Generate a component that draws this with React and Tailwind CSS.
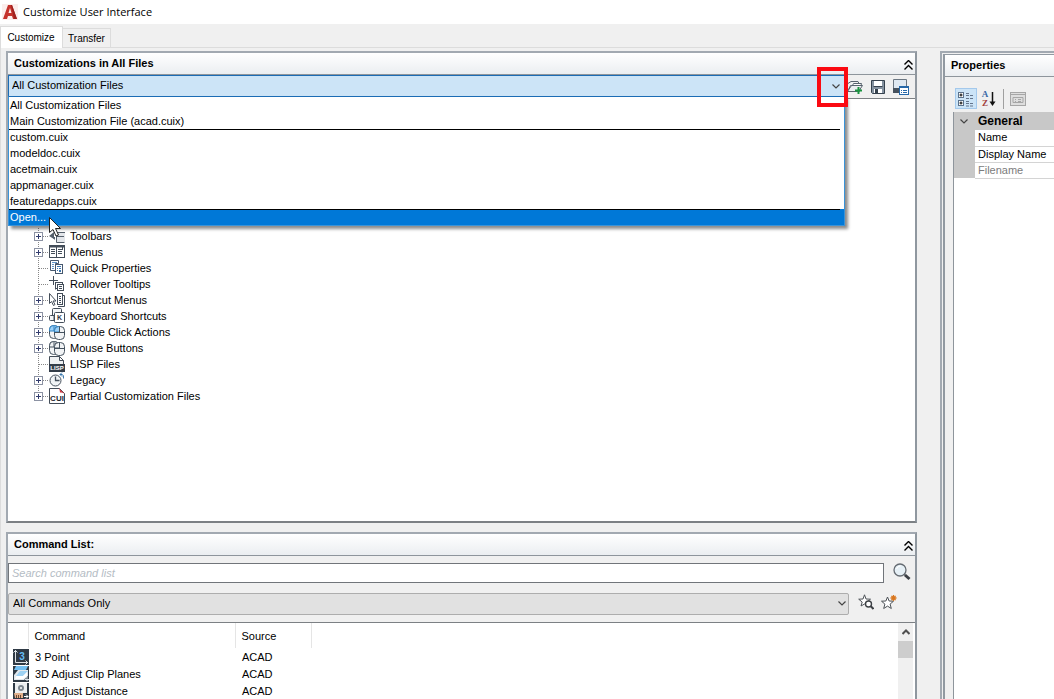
import React, { useState } from 'react';

const customizationFiles = [
  { name: 'All Customization Files' },
  { name: 'Main Customization File (acad.cuix)' },
  { name: 'custom.cuix', separator: true },
  { name: 'modeldoc.cuix' },
  { name: 'acetmain.cuix' },
  { name: 'appmanager.cuix' },
  { name: 'featuredapps.cuix' },
  { name: 'Open...', separator: true },
];

const treeItems = [
  { label: 'Toolbars', icon: 'toolbars', expandable: true },
  { label: 'Menus', icon: 'menus', expandable: true },
  { label: 'Quick Properties', icon: 'quick' },
  { label: 'Rollover Tooltips', icon: 'rollover' },
  { label: 'Shortcut Menus', icon: 'shortcut', expandable: true },
  { label: 'Keyboard Shortcuts', icon: 'keyboard', expandable: true },
  { label: 'Double Click Actions', icon: 'doubleClick', expandable: true },
  { label: 'Mouse Buttons', icon: 'mouse', expandable: true },
  { label: 'LISP Files', icon: 'lisp' },
  { label: 'Legacy', icon: 'legacy', expandable: true },
  { label: 'Partial Customization Files', icon: 'cui', expandable: true },
];

const commands = [
  { name: '3 Point', source: 'ACAD', icon: 'point' },
  { name: '3D Adjust Clip Planes', source: 'ACAD', icon: 'clip' },
  { name: '3D Adjust Distance', source: 'ACAD', icon: 'distance' },
];

const properties = [
  { label: 'Name' },
  { label: 'Display Name' },
  { label: 'Filename', disabled: true },
];

const Mouse = ({ buttonFill, buttonStroke }) => (
  <g fill="#f1f3f5" stroke="#45525f">
    <rect x="0.5" y="1.5" width="9" height="13" rx="4" />
    <path d="M0.5 7V5.500q0-4 4-4h1q4 0 4 4V7z" fill={buttonFill} stroke={buttonStroke} />
    <path d="M5 2v5" stroke={buttonStroke} />
    <rect x="5.500" y="2.500" width="10" height="13" rx="4" />
    <path d="M5.500 8V6.500q0-4 4-4h1V8z" fill={buttonFill} stroke={buttonStroke} />
    <path d="M5.500 8.500h10M10.500 2.500v6" fill="none" />
  </g>
);

const treeIcons = {
  toolbars: (
    <g fill="none" stroke="#555f6b">
      <path d="M7 5h9v9H7z" fill="#e3e6ea" stroke="none" />
      <path d="M5 4.500h11M7.500 4.500v10M7.500 14.500h8M8 8.500h7" />
      <path d="M0 8l5-4v7z" fill="#555f6b" stroke="none" />
      <path d="M3 9l3 3v-3z" fill="#555f6b" stroke="none" />
    </g>
  ),
  menus: (
    <g fill="none" stroke="#434d59">
      <rect x="0.5" y="1.5" width="15" height="12" fill="#fff" />
      <path d="M0 2.500h16" strokeWidth="2" />
      <path d="M7.500 3v10M13.500 3v2" />
      <path d="M2 5.500h4M2 7.500h4M2 9.500h4M9 5.500h5M9 7.500h4M9 9.500h4" />
    </g>
  ),
  quick: (
    <g stroke="#46586e" fill="#fff">
      <path d="M1.500 0.500h8v3h-3v7h-5z" />
      <path d="M3 2.500h5M3 4.500h2M3 6.500h2M3 8.500h2" stroke="#5f94c9" />
      <rect x="6.500" y="4.500" width="7" height="9" />
      <path d="M8 6.500h4M8 8.500h1M10 8.500h2M8 10.500h1" stroke="#3d76b0" />
      <path d="M10 10h2v2h-2z" fill="#3d76b0" stroke="none" />
    </g>
  ),
  rollover: (
    <g stroke="#434d59" fill="#fff">
      <path d="M4.500 0v9M0 4.500h9" />
      <path d="M6.500 13.500v-6h7" fill="none" />
      <rect x="6.500" y="6.500" width="7" height="6" />
      <rect x="8.500" y="8.500" width="6" height="6" />
      <path d="M10 10.500h3M10 12.500h3" />
    </g>
  ),
  shortcut: (
    <g stroke="#434d59" fill="#fff">
      <path d="M0.500 1.500v10l2-2 2 4 1.500-1-2-3.500h3z" />
      <path d="M13 3.500h2.500v11H9" />
      <rect x="8.500" y="1.500" width="5" height="11" />
      <path d="M10 4.500h2M10 6.500h2M10 8.500h2M10 10.500h2" />
    </g>
  ),
  keyboard: (
    <g stroke="#434d59" fill="#f4f6f8">
      <rect x="3.500" y="0.500" width="9" height="8" rx="1" />
      <path d="M5 12.500H1.500q-1 0-1-1v-3q0-1 1-1H5z" />
      <rect x="5.500" y="4.500" width="10" height="10" rx="1" fill="#fff" />
      <text x="10.500" y="12" textAnchor="middle" fontSize="7" fontWeight="bold" fill="#2c3540" stroke="none">
        K
      </text>
    </g>
  ),
  doubleClick: <Mouse buttonFill="#9bd0f7" buttonStroke="#2f83c4" />,
  mouse: <Mouse buttonFill="#f1f3f5" buttonStroke="#45525f" />,
  lisp: (
    <g>
      <path d="M0.500 9V0.500h10l4 4V9M10.500 0.500v4h4" fill="#eef0f2" stroke="#434d59" />
      <rect x="0" y="8" width="16" height="8" fill="#333d48" />
      <text x="8" y="14" textAnchor="middle" fontSize="6" fontWeight="bold" fill="#fff">
        LISP
      </text>
    </g>
  ),
  legacy: (
    <g fill="#f1f4f6" stroke="#46515d">
      <circle cx="6.500" cy="8.500" r="5.500" />
      <path d="M6.500 4.500v4h4" fill="none" strokeWidth="1.300" />
      <path d="M11 2.500h2q2 0 1.500 4M13 0.500l-2 2 2 2" stroke="#3776ac" fill="none" />
    </g>
  ),
  cui: (
    <g>
      <path d="M0.500 15.500v-15h10l5 5v10z" fill="#fff" stroke="#434d59" />
      <path d="M9.500 0l6.500 6q-2-2-5-1.500 0-3-1.500-4.500z" fill="#cf3943" />
      <text x="8" y="13" textAnchor="middle" fontSize="8" fontWeight="bold" fill="#20262d">
        CUI
      </text>
    </g>
  ),
};

const commandIcons = {
  point: (
    <g>
      <rect width="16" height="16" fill="#2f3a45" />
      <path d="M2.500 1v12.500H15M0.500 3.500l2-2 2 2M12.500 11.500l2 2-2 2" stroke="#dfe4e8" fill="none" />
      <text x="9" y="11" textAnchor="middle" fontSize="10" fontWeight="bold" fill="#65bdf5">3</text>
    </g>
  ),
  clip: (
    <g>
      <rect width="16" height="16" fill="#2f3a45" />
      <path d="M3 0h12l-2 4H1z" fill="#72bff2" />
      <path d="M5 4h10v6l-4 4H1V9z" fill="#e2e8ec" />
      <path d="M3 10l4-5h8l-5 5z" fill="#9ed2f3" />
      <path d="M3 10h7l4-4v4l-4 3H2z" fill="#fff" />
      <path d="M14 11v4M12 13.500h4" stroke="#dfe4e8" />
    </g>
  ),
  distance: (
    <g>
      <rect width="16" height="16" fill="#2f3a45" />
      <rect x="2" y="0" width="12" height="10" fill="#eceff1" />
      <circle cx="8" cy="5" r="3" fill="#7d8790" />
      <circle cx="8" cy="5" r="1" fill="#fff" />
      <path d="M1 10h9v5H2z" fill="#e3b18c" />
      <path d="M3.500 12v3M5.500 12v3M7.500 12v3" stroke="#6d4a35" />
      <path d="M11 13.500h4M13 11.500l2 2-2 2" stroke="#fff" fill="none" />
    </g>
  ),
};

const SmallIcon = ({ children }) => (
  <svg className="block h-4 w-4 shrink-0" viewBox="0 0 16 16" aria-hidden="true">
    {children}
  </svg>
);

const Chevron = ({ className }) => (
  <svg className={className} viewBox="0 0 8 5" fill="none" aria-hidden="true">
    <path d="M0.500 0.500L4 4l3.500-3.500" stroke="#444" strokeWidth="1.200" />
  </svg>
);

const PanelHeader = ({ title, collapsible }) => (
  <div className="flex h-[22px] shrink-0 items-center justify-between border-b border-[#8e959c] bg-linear-to-b from-white to-[#ebeef1] pr-0.5 pb-0.5 pl-1.5">
    <h2 className="font-bold whitespace-nowrap text-black">{title}</h2>
    {collapsible && (
      <button type="button" aria-label={`Collapse ${title}`} className="pt-1">
        <svg className="block h-[10px] w-[9px]" viewBox="0 0 9 10" fill="none" stroke="#000">
          <path d="M0.500 4.500l4-4 4 4M0.500 9.500l4-4 4 4" strokeWidth="1.400" />
        </svg>
      </button>
    )}
  </div>
);

const TitleBar = () => (
  <header className="flex h-6 shrink-0 items-center gap-[5px] bg-white pl-0.5">
    <svg className="h-4 w-4" viewBox="0 0 16 16" aria-hidden="true">
      <rect width="16" height="16" fill="#fbeeec" />
      <path d="M1 15L6 1h4l5 14h-4l-1-3H6l-1 3z" fill="#c5322b" />
      <path d="M6.500 9L8 4l1.500 5z" fill="#fbeeec" />
      <path d="M9 1h1l5 14h-3z" fill="#9f221f" />
    </svg>
    <h1 className="font-['Open_Sans','Noto_Sans',sans-serif] text-[11px] text-black">
      Customize User Interface
    </h1>
  </header>
);

const Tabs = () => (
  <nav className="flex h-6 shrink-0 items-end border-b border-[#dcdcdc]" role="tablist">
    <button type="button" role="tab" aria-selected="true" className="-mb-px h-[22px] w-[63px] border border-b-0 border-[#dcdcdc] bg-white pr-px text-[10px]">
      Customize
    </button>
    <button type="button" role="tab" aria-selected="false" className="h-[19px] w-12 border-t border-r border-[#dcdcdc] pt-px text-[10px]">
      Transfer
    </button>
  </nav>
);

const FileDropdown = ({ onSelect }) => (
  <ul
    role="listbox"
    aria-label="Customization files"
    className="absolute top-full -right-px -left-px z-10 border border-[#3a93d8] border-t-[#1b6cb5] bg-white shadow-[3px_3px_3px_rgba(0,0,0,0.45)]"
  >
    {customizationFiles.map((file) => {
      const isOpen = file.name === 'Open...';

      return (
        <li
          key={file.name}
          role="option"
          aria-selected={isOpen}
          onClick={() => onSelect(file.name)}
          className={`relative h-4 px-px leading-4 ${isOpen ? 'bg-[#0078d7] text-white' : 'text-black'}`}
        >
          {file.separator && <span className="absolute top-0 right-1 left-0 h-px bg-black" />}
          {file.name}
        </li>
      );
    })}
    {/* Mouse pointer */}
    <li role="presentation" className="pointer-events-none absolute bottom-0 left-10">
      <svg className="absolute -top-2 left-0 h-5 w-3.5" viewBox="0 0 14 20" aria-hidden="true">
        <path d="M0.500 0.500v15l3.500-3 3 6.500 2.500-1-3-6.500h5z" fill="#fff" stroke="#222" />
      </svg>
    </li>
  </ul>
);

const FileToolbar = () => (
  <div className="flex w-[70px] shrink-0 items-center justify-between pr-1.5 pl-0.5">
    <button type="button" aria-label="Load partial customization file">
      <SmallIcon>
        <path d="M0.500 12.500l3-6h2l1-2h8l-2 8z" fill="#fff" stroke="#59636e" />
        <path d="M0.500 12.500l4-6h11l-4 6z" fill="#eceff1" stroke="#59636e" />
        <path d="M1 4.500l3-2h7l1 2" fill="none" stroke="#59636e" />
        <path d="M11.500 8v7M8 11.500h7" stroke="#1a9440" strokeWidth="2" />
      </SmallIcon>
    </button>
    <button type="button" aria-label="Save all current customization files">
      <SmallIcon>
        <path d="M1.500 1.500h13v13h-12l-1-1z" fill="#8592a0" stroke="#35414d" />
        <path d="M4 2h8v5H4z" fill="#fff" />
        <path d="M3.500 7.500h9" stroke="#35414d" />
        <path d="M4 10h8v4H4z" fill="#fff" />
        <path d="M5 10h3v4H5z" fill="#35414d" />
      </SmallIcon>
    </button>
    <button type="button" aria-label="Display all types of customization elements">
      <SmallIcon>
        <path d="M0.500 0.500h13v12h-13z" fill="#dfe8f1" stroke="#6a7682" />
        <path d="M0 9h7v5H0z" fill="#46515d" />
        <rect x="6.500" y="7.500" width="9" height="8" fill="#fff" stroke="#2668a9" />
        <path d="M6 8.500h10M8 11.500h1M10 11.500h4M8 13.500h1M10 13.500h4" stroke="#2668a9" />
      </SmallIcon>
    </button>
  </div>
);

const TreeRow = ({ item, isLast }) => (
  <li role="treeitem" className="flex h-4 items-center text-black">
    <svg className="block h-4 w-4 shrink-0" viewBox="0 0 16 16" fill="none" aria-hidden="true">
      <path d={isLast ? 'M5.500 0v8' : 'M5.500 0v16'} stroke="#888" strokeDasharray="1 1" />
      <path d="M6 8.500h10" stroke="#888" strokeDasharray="1 1" />
      {item.expandable && (
        <>
          <rect x="1.500" y="4.500" width="8" height="8" fill="#fff" stroke="#8c92a3" />
          <path d="M3 8.500h5M5.500 6v5" stroke="#323c6e" />
        </>
      )}
    </svg>
    <SmallIcon>{treeIcons[item.icon]}</SmallIcon>
    <span className="pl-[5px] whitespace-nowrap">{item.label}</span>
  </li>
);

const CustomizationPanel = () => {
  const [file, setFile] = useState('All Customization Files');

  return (
    <section className="flex min-h-0 flex-1 flex-col border-2 border-[#a2a9b1] border-r-[#8f979f] border-b-[#7c8084]">
      <PanelHeader title="Customizations in All Files" collapsible />
      <div className="flex h-[23px] shrink-0">
        <div className="relative mb-px flex-1 border border-[#1b6cb5] bg-[#cce4f7]">
          <select
            aria-label="Customization file"
            value={file}
            onChange={(e) => setFile(e.target.value)}
            className="block h-full w-full appearance-none bg-transparent px-[3px] pb-0.5 text-black outline-none"
          >
            {customizationFiles.map((f) => (
              <option key={f.name}>{f.name}</option>
            ))}
          </select>
          <Chevron className="pointer-events-none absolute top-2 right-1 h-[5px] w-2" />
          <FileDropdown onSelect={setFile} />
          {/* Callout around the drop-down arrow */}
          <div className="pointer-events-none absolute -top-[9px] -right-1 z-20 h-10 w-[31px] border-4 border-[#fb0a12]" />
        </div>
        <FileToolbar />
      </div>
      <ul role="tree" aria-label="Customizations" className="min-h-0 flex-1 overflow-hidden border-t border-[#7c8084] bg-white pt-[129px] pl-[25px]">
        {treeItems.map((item, i) => (
          <TreeRow key={item.label} item={item} isLast={i === treeItems.length - 1} />
        ))}
      </ul>
    </section>
  );
};

const CommandPanel = () => (
  <section className="flex h-[167px] shrink-0 flex-col border-2 border-b-0 border-[#a2a9b1] border-r-[#8f979f]">
    <PanelHeader title="Command List:" collapsible />
    <div className="flex h-[27px] items-end pr-1">
      <input
        type="text"
        aria-label="Search command list"
        placeholder="Search command list"
        className="h-5 min-w-0 flex-1 border border-[#71757a] bg-white px-[3px] italic outline-none placeholder:text-[#b4bcc4]"
      />
      <button type="button" aria-label="Search" className="ml-[9px] pb-0.5">
        <svg className="block h-[18px] w-[18px]" viewBox="0 0 18 18" aria-hidden="true">
          <circle cx="7" cy="7" r="6" fill="#e6f0f6" stroke="#656b72" strokeWidth="1.300" />
          <path d="M3.500 6q1-3 4-3" stroke="#fff" fill="none" />
          <path d="M11 11l1.500 1.500" stroke="#656b72" strokeWidth="1.500" />
          <path d="M12 12l4.500 4" stroke="#3b3f44" strokeWidth="3" />
        </svg>
      </button>
    </div>
    <div className="flex items-center pt-2.5 pr-[18px]">
      <div className="relative min-w-0 flex-1">
        <select
          aria-label="Command category"
          className="block h-[22px] w-full appearance-none rounded-xs border border-[#adadad] bg-[#e1e1e1] px-1 pb-0.5 text-black outline-none"
        >
          <option>All Commands Only</option>
        </select>
        <Chevron className="pointer-events-none absolute top-2 right-[3px] h-[5px] w-2" />
      </div>
      <button type="button" aria-label="Find command" className="ml-[9px] pb-1">
        <SmallIcon>
          <path
            d="M6.500 0.800l1.500 4.200 4.500.2-3.500 2.800-2.500 2-3.500 2 1.200-4L.7 5.200 5 5z"
            fill="#fff"
            stroke="#4d5257"
          />
          <circle cx="10.500" cy="10" r="3" fill="#fff" stroke="#3d4145" strokeWidth="1.400" />
          <path d="M12.500 12l3 3" stroke="#3d4145" strokeWidth="2" />
        </SmallIcon>
      </button>
      <button type="button" aria-label="Create a new command" className="ml-[7px] pb-1">
        <SmallIcon>
          <path
            d="M6.500 3l1.600 4 4.400.2-3.400 2.900 1.200 4.400-3.800-2.400-3.800 2.400 1.200-4.400L.5 7.200 4.900 7z"
            fill="#fff"
            stroke="#4d5257"
          />
          <path d="M12.500 1v6M9.500 4h6M10.400 1.900l4.200 4.200M14.600 1.900l-4.200 4.200" stroke="#d9771f" strokeWidth="1.300" />
        </SmallIcon>
      </button>
    </div>
    <div className="mt-[7px] flex min-h-0 flex-1 border-t border-[#7c8084] bg-white">
      <div className="min-w-0 flex-1 overflow-hidden">
        <table className="w-full table-fixed border-collapse text-left text-black">
          <thead>
            <tr className="h-[25px]">
              <th className="w-[20px] border-r border-[#e5e5e5]" aria-label="Icon" />
              <th className="w-[207px] border-r border-[#e5e5e5] pl-1.5 font-normal">Command</th>
              <th className="w-[76px] border-r border-[#e5e5e5] pl-1.5 font-normal">Source</th>
              <th aria-label="Empty" />
            </tr>
          </thead>
          <tbody>
            {commands.map((command) => (
              <tr key={command.name} className="h-[17px]">
                <td className="p-0 pl-[5px]">
                  <SmallIcon>{commandIcons[command.icon]}</SmallIcon>
                </td>
                <td className="p-0 pl-[7px]">{command.name}</td>
                <td className="p-0 pl-[7px]">{command.source}</td>
                <td />
              </tr>
            ))}
          </tbody>
        </table>
      </div>
      <div className="mr-0.5 flex w-[15px] flex-col items-center bg-[#f0f0f0]">
        <button type="button" aria-label="Scroll up" className="flex h-[18px] items-center">
          <svg className="block h-[6px] w-2" viewBox="0 0 8 6" fill="none" aria-hidden="true">
            <path d="M0.500 5L4 1.500 7.500 5" stroke="#505050" strokeWidth="2" />
          </svg>
        </button>
        <div className="h-[17px] w-full bg-[#cdcdcd]" />
      </div>
    </div>
  </section>
);

const PropertiesPanel = () => (
  <aside className="flex w-[114px] shrink-0 flex-col overflow-hidden border-t-2 border-l-2 border-[#a2a9b1] pt-px pl-px">
    <div className="flex min-h-0 flex-1 flex-col border-t border-l-2 border-[#9199a1]">
      <PanelHeader title="Properties" />
      <div className="flex h-[35px] shrink-0 items-center pt-2 pl-2.5">
        <button type="button" aria-label="Categorized" className="flex h-[21px] w-[22px] items-center justify-center border border-[#a4c9ec] bg-[#cce4f7]">
          <SmallIcon>
            <rect x="0.500" y="1.500" width="5" height="5" fill="#fff" stroke="#5c728b" />
            <rect x="0.500" y="9.500" width="5" height="5" fill="#fff" stroke="#5c728b" />
            <path d="M1.500 4h3M3 2.500v3M1.500 12h3M3 10.500v3" stroke="#000" />
            <path
              d="M8 2.500h3M8 4.500h3M12 4.500h3M8 7.500h3M12 7.500h3M8 10.500h3M8 12.500h3M12 12.500h3M8 15h3M12 15h3"
              stroke="#64748b"
            />
          </SmallIcon>
        </button>
        <button type="button" aria-label="Alphabetical" className="ml-1 flex h-5 items-center text-[9px] leading-[9px] font-bold">
          <span className="flex w-2 flex-col items-center font-['Liberation_Serif',serif]">
            <span className="text-[#3966a5]">A</span>
            <span className="text-[#a3413d]">Z</span>
          </span>
          <svg className="block h-4 w-[7px]" viewBox="0 0 7 16" aria-hidden="true">
            <path d="M3.500 1v12" stroke="#111" strokeWidth="1.500" />
            <path d="M0.500 10.500h6l-3 4.500z" fill="#111" />
          </svg>
        </button>
        <span className="ml-[7px] h-5 w-px bg-[#a0a0a0]" />
        <button type="button" aria-label="Property pages" disabled className="ml-1.5">
          <SmallIcon>
            <rect x="0.500" y="1.500" width="15" height="13" fill="#dedede" stroke="#a6a6a6" />
            <path d="M1 3.500h14M3 6.500h10v5H3zM5 8.500h1M8 8.500h3M5 10.500h1M8 10.500h3" fill="none" stroke="#a6a6a6" />
          </SmallIcon>
        </button>
      </div>
      <div className="ml-2 min-h-0 flex-1 border-l border-[#8e959c] bg-white">
        <table className="w-full table-fixed border-collapse bg-white text-left">
          <thead>
            <tr className="h-[18px] bg-[#c8c8c8]">
              <th className="w-[21px] p-0">
                <Chevron className="ml-1.5 h-[5px] w-2" />
              </th>
              <th className="p-0 pl-[3px] text-xs leading-4 font-bold text-black">General</th>
            </tr>
          </thead>
          <tbody>
            {properties.map((property) => (
              <tr key={property.label} className="h-4">
                <td className="bg-[#c8c8c8] p-0" />
                <td className={`border-b border-[#d4d4d4] p-0 pl-[3px] leading-[15px] whitespace-nowrap ${property.disabled ? 'text-[#7c7c7c]' : 'text-black'}`}>
                  {property.label}
                </td>
              </tr>
            ))}
          </tbody>
        </table>
      </div>
    </div>
  </aside>
);

const App = () => (
  <div className="flex h-screen flex-col overflow-hidden bg-[#f0f0f0] font-['Liberation_Sans',Arial,sans-serif] text-[11px] leading-4">
    <TitleBar />
    <Tabs />
    <main className="flex min-h-0 flex-1 gap-[23px] border-l border-[#dcdcdc] pt-[3px] pl-[5px]">
      <div className="flex min-w-0 flex-1 flex-col gap-[9px]">
        <CustomizationPanel />
        <CommandPanel />
      </div>
      <PropertiesPanel />
    </main>
  </div>
);

export default App;
